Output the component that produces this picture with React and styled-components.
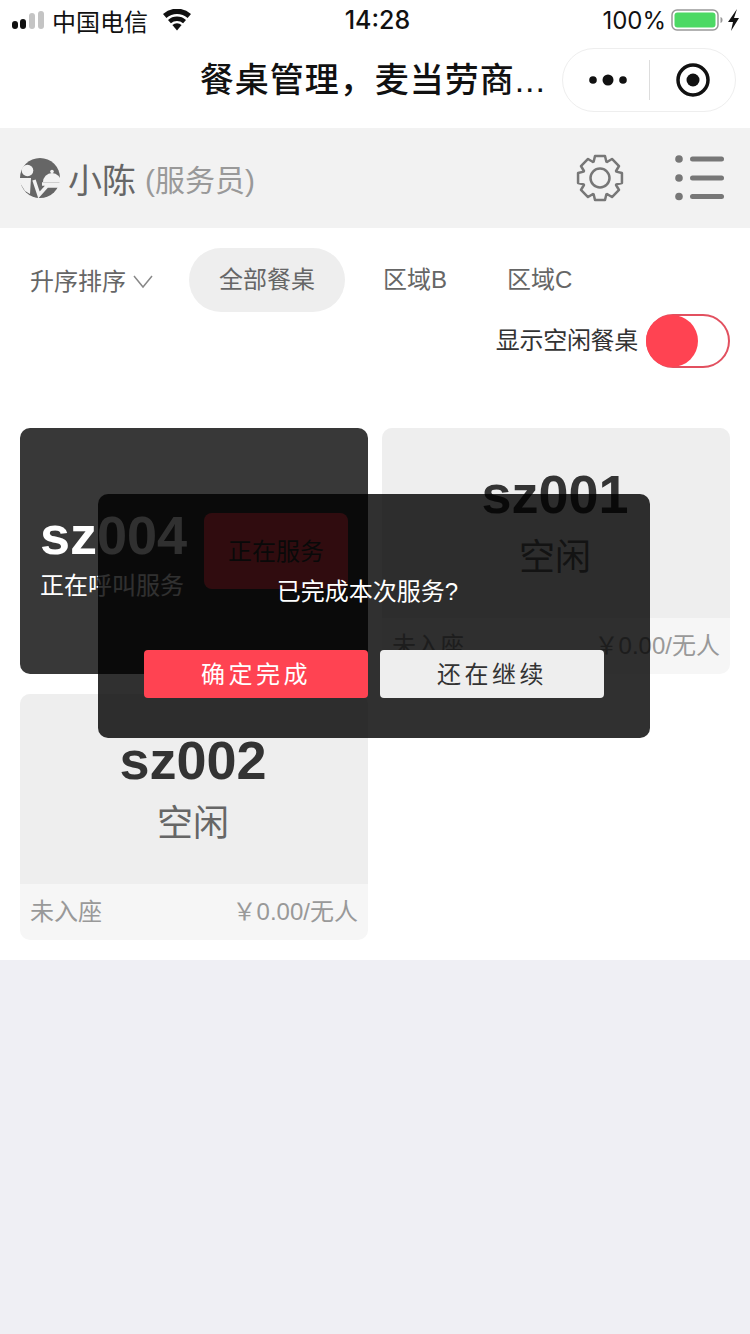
import styled, { createGlobalStyle } from 'styled-components';

const GlobalStyle = createGlobalStyle`
  html, body {
    margin: 0;
    padding: 0;
    background: #efeff4;
  }
  body {
    font-family: "Liberation Sans", "Noto Sans CJK SC", sans-serif;
    color: #333;
  }
`;

const Screen = styled.div`
  position: relative;
  width: 750px;
  height: 1334px;
  overflow: hidden;
  background: #efeff4;
`;
const Page = styled.div`
  background: #fff;
  padding-bottom: 20px;
`;

const StatusBar = styled.div`
  height: 40px;
  display: flex;
  align-items: center;
  justify-content: space-between;
  padding: 0 11px 0 12px;
  font-size: 24px;
  color: #111;
`;
const StatusSide = styled.div`
  width: 260px;
  display: flex;
  align-items: center;
  justify-content: ${(p) => (p.$right ? 'flex-end' : 'flex-start')};
`;
const Carrier = styled.span`
  margin: 0 14px 0 6px;
  font-size: 24px;
`;
const Clock = styled.span`
  margin-left: 4px;
  font-family: Inter, "Liberation Sans", sans-serif;
  font-size: 25px;
  font-weight: 500;
`;
const Percent = styled.span`
  font-family: Inter, "Liberation Sans", sans-serif;
  font-size: 24px;
  margin-right: 5px;
`;

const NavBar = styled.div`
  height: 88px;
  box-sizing: border-box;
  padding: 0 14px 8px 0;
  display: flex;
  align-items: center;
  justify-content: flex-end;
`;
const NavTitle = styled.div`
  margin: 0 16px 6px 0;
  font-size: 34px;
  font-weight: 500;
  letter-spacing: 1px;
  color: #111;
`;
const Capsule = styled.div`
  width: 174px;
  height: 64px;
  box-sizing: border-box;
  border: 1px solid #eee;
  border-radius: 32px;
  display: flex;
  align-items: center;
`;
const CapsulePart = styled.div`
  flex: none;
  width: 86px;
  height: 40px;
  box-sizing: border-box;
  display: flex;
  align-items: center;
  justify-content: center;
  &:first-child {
    padding-left: 4px;
  }
  & + & {
    border-left: 1px solid #ddd;
  }
`;

const Header = styled.div`
  height: 100px;
  display: flex;
  align-items: center;
  padding: 0 25px 0 20px;
  background: #f2f2f2;
`;
const UserName = styled.span`
  margin-left: 8px;
  font-size: 34px;
  color: #666;
`;
const UserRole = styled.span`
  margin-left: 9px;
  font-size: 30px;
  color: #999;
`;
const HeaderTools = styled.div`
  margin-left: auto;
  display: flex;
  align-items: center;
  gap: 51px;
`;

const FilterRow = styled.div`
  height: 64px;
  margin-top: 20px;
  display: flex;
  align-items: center;
  padding-left: 30px;
  font-size: 24px;
  color: #666;
`;
const Sort = styled.div`
  display: flex;
  align-items: center;
  gap: 7px;
  margin-right: 36px;
  padding-bottom: 1px;
`;
const SortArrow = styled.div`
  display: flex;
  padding-top: 4px;
`;
const Tab = styled.div`
  height: 64px;
  line-height: 64px;
  padding: 0 30px;
  margin-right: ${(p) => (p.$active ? '8px' : '0')};
  border-radius: 32px;
  background: ${(p) => (p.$active ? '#eee' : 'transparent')};
`;

const ToggleRow = styled.div`
  margin-top: 2px;
  display: flex;
  align-items: center;
  justify-content: flex-end;
  gap: 8px;
  padding-right: 20px;
  font-size: 24px;
  color: #333;
`;
const ToggleLabel = styled.span`
  padding-bottom: 5px;
  letter-spacing: -0.3px;
`;
const Toggle = styled.div`
  width: 84px;
  height: 54px;
  box-sizing: border-box;
  border: 2px solid #e2505f;
  border-radius: 27px;
  display: flex;
  align-items: center;
`;
const Knob = styled.div`
  width: 52px;
  height: 52px;
  margin-left: -2px;
  border-radius: 50%;
  background: #ff4352;
`;

const TableGrid = styled.div`
  margin-top: 60px;
  padding: 0 20px;
  display: grid;
  grid-template-columns: 348px 348px;
  column-gap: 14px;
  row-gap: 20px;
`;
const Card = styled.div`
  height: 246px;
  border-radius: 10px;
  overflow: hidden;
  display: flex;
  flex-direction: column;
  background: #f6f6f6;
`;
const BusyCard = styled.div`
  height: 246px;
  box-sizing: border-box;
  border-radius: 10px;
  padding: 0 20px;
  display: flex;
  align-items: center;
  gap: 20px;
  background: #383838;
`;
const BusyInfo = styled.div`
  width: 144px;
  padding-top: 9px;
  color: #fff;
`;
const TableName = styled.div`
  font-size: 54px;
  line-height: 54px;
  font-weight: 700;
  white-space: nowrap;
  color: ${(p) => (p.$light ? '#fff' : '#333')};
`;
const BusyText = styled.div`
  margin-top: 7px;
  font-size: 24px;
  line-height: 34px;
  white-space: nowrap;
`;
const ServingButton = styled.div`
  width: 144px;
  height: 76px;
  box-sizing: border-box;
  padding-bottom: 3px;
  border-radius: 8px;
  display: flex;
  align-items: center;
  justify-content: center;
  font-size: 24px;
  color: #333;
  background: #ff4352;
`;
const CardBody = styled.div`
  height: 190px;
  box-sizing: border-box;
  padding: 39px 2px 0 0;
  text-align: center;
  background: #eee;
`;
const CardState = styled.div`
  margin-top: 12px;
  font-size: 36px;
  line-height: 50px;
  color: #666;
`;
const CardFooter = styled.div`
  flex: 1;
  display: flex;
  align-items: center;
  justify-content: space-between;
  padding: 0 10px 6px;
  font-size: 24px;
  color: #999;
`;

const Dialog = styled.div`
  position: absolute;
  left: 98px;
  top: 494px;
  width: 552px;
  height: 244px;
  box-sizing: border-box;
  padding-bottom: 40px;
  border-radius: 10px;
  display: flex;
  flex-direction: column;
  align-items: center;
  justify-content: flex-end;
  background: rgba(0, 0, 0, 0.81);
`;
const DialogText = styled.div`
  margin: 0 13px 41px 0;
  font-size: 24px;
  line-height: 34px;
  color: #fff;
`;
const DialogButtons = styled.div`
  display: flex;
  gap: 12px;
`;
const DialogButton = styled.div`
  width: 224px;
  height: 48px;
  box-sizing: border-box;
  padding-bottom: 3px;
  border-radius: 4px;
  display: flex;
  align-items: center;
  justify-content: center;
  font-size: 24px;
  letter-spacing: 3.5px;
  color: ${(p) => (p.$primary ? '#fff' : '#333')};
  background: ${(p) => (p.$primary ? '#ff4352' : '#eee')};
`;

function Signal() {
  return (
    <svg width="34" height="24" viewBox="0 0 34 24">
      <rect x="0" y="13" width="6" height="8" rx="3" fill="#111" />
      <rect x="8" y="11" width="6" height="10" rx="3" fill="#111" />
      <rect x="17" y="5" width="6" height="16" rx="3" fill="#c4c4c4" />
      <rect x="26" y="3" width="6" height="18" rx="3" fill="#c4c4c4" />
    </svg>
  );
}

function Wifi() {
  return (
    <svg width="30" height="22" viewBox="0 0 30 22" fill="#111">
      <path d="M15 21.500l-4.600-5.400a6.800 6.800 0 0 1 9.200 0z" />
      <path d="M8.900 14.300l-2.900-3.400a13.600 13.600 0 0 1 18 0l-2.900 3.400a9.400 9.400 0 0 0-12.200 0z" />
      <path d="M4.400 9L1 5a21 21 0 0 1 28 0l-3.400 4a16.400 16.400 0 0 0-21.200 0z" />
    </svg>
  );
}

function Battery() {
  return (
    <svg width="68" height="24" viewBox="0 0 68 24">
      <rect x="1" y="2" width="46" height="20" rx="5" fill="none" stroke="#999" strokeWidth="1.5" />
      <rect x="3.5" y="4.5" width="41" height="15" rx="3" fill="#4cd964" />
      <path d="M49.500 9v6c1.600-.5 2-1.600 2-3s-.4-2.500-2-3z" fill="#999" />
      <path d="M66 1L57 14h5l-2 9 8-13h-5z" fill="#111" />
    </svg>
  );
}

function Dots() {
  return (
    <svg width="40" height="16" viewBox="0 0 40 16" fill="#111">
      <circle cx="5" cy="8" r="3.800" />
      <circle cx="20" cy="8" r="5.500" />
      <circle cx="35" cy="8" r="3.800" />
    </svg>
  );
}

function Target() {
  return (
    <svg width="36" height="36" viewBox="0 0 36 36">
      <circle cx="18" cy="18" r="15" fill="none" stroke="#111" strokeWidth="3.500" />
      <circle cx="18" cy="18" r="6.500" fill="#111" />
    </svg>
  );
}

function Avatar() {
  return (
    <svg width="40" height="40" viewBox="0 0 40 40">
      <circle cx="20" cy="20" r="20" fill="#666" />
      <g fill="#f2f2f2">
        <circle cx="7.500" cy="12.500" r="5.800" />
        <path d="M0 20h11l-1 16-5-3-5-8z" />
        <path d="M23 24a9 9 0 0 1 18 0z" />
        <circle cx="32" cy="13.500" r="1.800" />
      </g>
      <path d="M14 22l5 15 8-9h14M22 26h18" fill="none" stroke="#f2f2f2" strokeWidth="3.500" />
    </svg>
  );
}

// 8 teeth, generated so the outline stays even
function gearPath() {
  const cx = 24;
  const cy = 24;
  const step = Math.PI / 4;
  const pts = [];
  for (let i = 0; i < 8; i++) {
    const a = i * step - Math.PI / 2;
    [
      [-0.5, 17.5],
      [-0.3, 22.5],
      [0.3, 22.5],
      [0.5, 17.5],
    ].forEach(([k, r]) => {
      const t = a + k * step * 0.95;
      pts.push(`${(cx + r * Math.cos(t)).toFixed(2)} ${(cy + r * Math.sin(t)).toFixed(2)}`);
    });
  }
  return `M${pts.join('L')}Z`;
}

function Gear() {
  return (
    <svg width="48" height="48" viewBox="0 0 48 48" fill="none" stroke="#777" strokeWidth="2.500" strokeLinejoin="round">
      <path d={gearPath()} />
      <circle cx="24" cy="24" r="9.500" />
    </svg>
  );
}

function ListIcon() {
  return (
    <svg width="50" height="46" viewBox="0 0 50 46" fill="#777">
      <circle cx="4" cy="4" r="3.800" />
      <circle cx="4" cy="23" r="3.800" />
      <circle cx="4" cy="41.500" r="3.800" />
      <rect x="15" y="1.500" width="34" height="5" rx="2.500" />
      <rect x="15" y="20.500" width="34" height="5" rx="2.500" />
      <rect x="15" y="39" width="34" height="5" rx="2.500" />
    </svg>
  );
}

function Chevron() {
  return (
    <svg width="20" height="14" viewBox="0 0 20 14" fill="none" stroke="#888" strokeWidth="1.500">
      <path d="M1 1l9 11 9-11" />
    </svg>
  );
}

const freeTables = [
  { id: 'sz001' },
  { id: 'sz002' },
];

function FreeTable({ table }) {
  return (
    <Card>
      <CardBody>
        <TableName>{table.id}</TableName>
        <CardState>空闲</CardState>
      </CardBody>
      <CardFooter>
        <span>未入座</span>
        <span>￥0.00/无人</span>
      </CardFooter>
    </Card>
  );
}

export default function App() {
  return (
    <Screen>
      <GlobalStyle />
      <Page>
        <StatusBar>
          <StatusSide>
            <Signal />
            <Carrier>中国电信</Carrier>
            <Wifi />
          </StatusSide>
          <Clock>14:28</Clock>
          <StatusSide $right>
            <Percent>100%</Percent>
            <Battery />
          </StatusSide>
        </StatusBar>
        <NavBar>
          <NavTitle>餐桌管理，麦当劳商...</NavTitle>
          <Capsule>
            <CapsulePart>
              <Dots />
            </CapsulePart>
            <CapsulePart>
              <Target />
            </CapsulePart>
          </Capsule>
        </NavBar>
        <Header>
          <Avatar />
          <UserName>小陈</UserName>
          <UserRole>(服务员)</UserRole>
          <HeaderTools>
            <Gear />
            <ListIcon />
          </HeaderTools>
        </Header>
        <FilterRow>
          <Sort>
            升序排序
            <SortArrow>
              <Chevron />
            </SortArrow>
          </Sort>
          <Tab $active>全部餐桌</Tab>
          <Tab>区域B</Tab>
          <Tab>区域C</Tab>
        </FilterRow>
        <ToggleRow>
          <ToggleLabel>显示空闲餐桌</ToggleLabel>
          <Toggle>
            <Knob />
          </Toggle>
        </ToggleRow>
        <TableGrid>
          <BusyCard>
            <BusyInfo>
              <TableName $light>sz004</TableName>
              <BusyText>正在呼叫服务</BusyText>
            </BusyInfo>
            <ServingButton>正在服务</ServingButton>
          </BusyCard>
          {freeTables.map((table) => (
            <FreeTable key={table.id} table={table} />
          ))}
        </TableGrid>
      </Page>
      <Dialog>
        <DialogText>已完成本次服务?</DialogText>
        <DialogButtons>
          <DialogButton $primary>确定完成</DialogButton>
          <DialogButton>还在继续</DialogButton>
        </DialogButtons>
      </Dialog>
    </Screen>
  );
}
